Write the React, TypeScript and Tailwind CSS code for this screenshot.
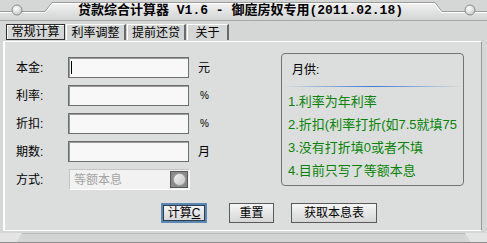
import React from 'react';

const cjk = "font-['Liberation_Sans','Noto_Sans_CJK_SC',sans-serif]";

function TitleBar() {
  return (
    <div className="relative h-[21px] shrink-0">
      <svg className="absolute inset-0" width="487" height="21" viewBox="0 0 487 21">
        <defs>
          <linearGradient id="tb" x1="0" y1="0" x2="0" y2="1">
            <stop offset="0" stopColor="#f2f2f2" />
            <stop offset="1" stopColor="#d2d4d3" />
          </linearGradient>
          <radialGradient id="knob" cx="0.4" cy="0.35" r="0.7">
            <stop offset="0" stopColor="#ffffff" />
            <stop offset="1" stopColor="#c4c4c4" />
          </radialGradient>
        </defs>
        <rect x="0" y="0" width="487" height="21" fill="#d5d7d6" />
        <polygon points="0,12 45,12 52,3 435,3 442,12 487,12 487,20 0,20" fill="url(#tb)" />
        <polyline points="0,11.5 45,11.5 52,2.5 435,2.5 442,11.5 487,11.5" fill="none" stroke="#9a9a9a" strokeWidth="1" />
        <polyline points="0,12.5 45.5,12.5 52.5,3.5 434.5,3.5 441.5,12.5 487,12.5" fill="none" stroke="#ffffff" strokeWidth="1" />
        <line x1="0" y1="20.5" x2="487" y2="20.5" stroke="#a8a8a8" />
        <circle cx="17" cy="10" r="5" fill="url(#knob)" stroke="#8c8c8c" />
        <circle cx="470" cy="10" r="5" fill="url(#knob)" stroke="#8c8c8c" />
      </svg>
      <div className="relative h-full flex items-center justify-center pr-[6px]">
        <span className="text-[13px] font-bold text-black leading-none font-['Liberation_Mono','Noto_Sans_CJK_SC',monospace] whitespace-pre">
          贷款综合计算器 V1.6 - 御庭房奴专用(2011.02.18)
        </span>
      </div>
    </div>
  );
}

function Tab({ label, active, w }: { label: string; active?: boolean; w: string }) {
  return (
    <div
      className={`${w} h-[16px] flex items-center justify-center text-[12px] leading-none text-black ${
        active
          ? 'border border-[#303030] shadow-[inset_1px_1px_0_#ffffff]'
          : 'border-l border-t border-white border-r-2 border-r-[#6a6a6a]'
      }`}
    >
      {label}
    </div>
  );
}

function Field({ label, unit, caret }: { label: string; unit: string; caret?: boolean }) {
  return (
    <div className="flex items-center h-[21px]">
      <span className="w-[52px] text-[12px] text-black">{label}</span>
      <div className="relative w-[121px] h-[21px] bg-[#f8f8f8] border border-[#6e6e6e] shadow-[inset_1px_1px_0_#9a9a9a]">
        {caret && <span className="absolute left-[2px] top-[3px] w-px h-[13px] bg-black" />}
      </div>
      <span className={`ml-[9px] text-black ${unit === '%' ? 'text-[10px] pl-[2px]' : 'text-[12px]'}`}>{unit}</span>
    </div>
  );
}

function Btn({ children, w, focused }: { children: React.ReactNode; w: string; focused?: boolean }) {
  return (
    <div
      className={`${w} h-[20px] flex items-center justify-center text-[12px] text-black bg-gradient-to-b from-[#f6f6f6] to-[#d6d6d6] ${
        focused ? 'border-2 border-[#5b87b5] shadow-[inset_0_0_0_1px_#2c3e50]' : 'border border-[#5a5a5a]'
      }`}
    >
      {children}
    </div>
  );
}

export default function App() {
  const notes = ['1.利率为年利率', '2.折扣(利率打折(如7.5就填75', '3.没有打折填0或者不填', '4.目前只写了等额本息'];

  return (
    <div className={`w-[487px] h-[243px] bg-[#d5d7d6] flex flex-col overflow-hidden ${cjk}`}>
      <TitleBar />

      {/* tabs */}
      <div className="flex items-end h-[19px] pl-[6px] pt-[2px] gap-[1px]">
        <Tab label="常规计算" active w="w-[59px]" />
        <Tab label="利率调整" w="w-[60px]" />
        <Tab label="提前还贷" w="w-[59px]" />
        <Tab label="关于" w="w-[42px]" />
      </div>

      {/* main panel */}
      <div className="ml-[3px] mr-[5px] mt-[1px] h-[190px] bg-[#dcdedd] border-t border-l-2 border-white border-r border-r-[#9c9c9c] border-b border-b-white flex flex-col">
        <div className="flex pt-[11px]">
          <div className="w-[276px] pl-[11px] pt-[4px] flex flex-col gap-[7px]">
            <Field label="本金:" unit="元" caret />
            <Field label="利率:" unit="%" />
            <Field label="折扣:" unit="%" />
            <Field label="期数:" unit="月" />
            <div className="flex items-center h-[21px]">
              <span className="w-[53px] text-[12px] text-black">方式:</span>
              <div className="w-[121px] h-[21px] flex items-center bg-[#f2f2f2] border border-[#c4c4c4] border-b-white border-r-white pl-[4px] pr-[1px]">
                <span className="flex-1 text-[12px] text-[#a4a4a4]">等额本息</span>
                <div className="w-[18px] h-[17px] bg-[#8a8a8a] border border-[#555] flex items-center justify-center">
                  <div className="w-[13px] h-[13px] rounded-full bg-gradient-to-br from-[#f4f4f4] to-[#c4c4c4] border border-[#a0a0a0]" />
                </div>
              </div>
            </div>
          </div>

          <div className="w-[183px] h-[133px] border border-[#737373] rounded-[4px] flex flex-col">
            <div className="h-[32px] flex items-center pl-[10px] text-[12px] text-black">月供:</div>
            <div className="h-[1px] bg-gradient-to-r from-[#dcdedd] via-[#3a78d0] to-[#dcdedd]" />
            <div className="pt-[3px] pl-[6px] flex flex-col">
              {notes.map((n) => (
                <div key={n} className="h-[23px] leading-[23px] text-[13px] text-[#078407] whitespace-nowrap">
                  {n}
                </div>
              ))}
            </div>
          </div>
        </div>

        <div className="flex items-center pl-[156px] mt-[13px] gap-[22px]">
          <Btn w="w-[46px]" focused>
            <span>
              计算<span className="underline">C</span>
            </span>
          </Btn>
          <div className="flex gap-[17px]">
            <Btn w="w-[45px]">重置</Btn>
            <Btn w="w-[86px]">获取本息表</Btn>
          </div>
        </div>
      </div>

      {/* bottom chrome */}
      <div className="flex-1 flex mt-[2px] border-b border-[#8a8a8a]">
        <div className="w-[22px] bg-[#e4e4e4] [clip-path:polygon(0_0,100%_0,75%_100%,0_100%)]" />
        <div className="flex-1 bg-[#d2d4d3] border-t border-[#b8b8b8]" />
        <div className="w-[22px] bg-[#e4e4e4] [clip-path:polygon(0_0,100%_0,100%_100%,25%_100%)]" />
      </div>
    </div>
  );
}
